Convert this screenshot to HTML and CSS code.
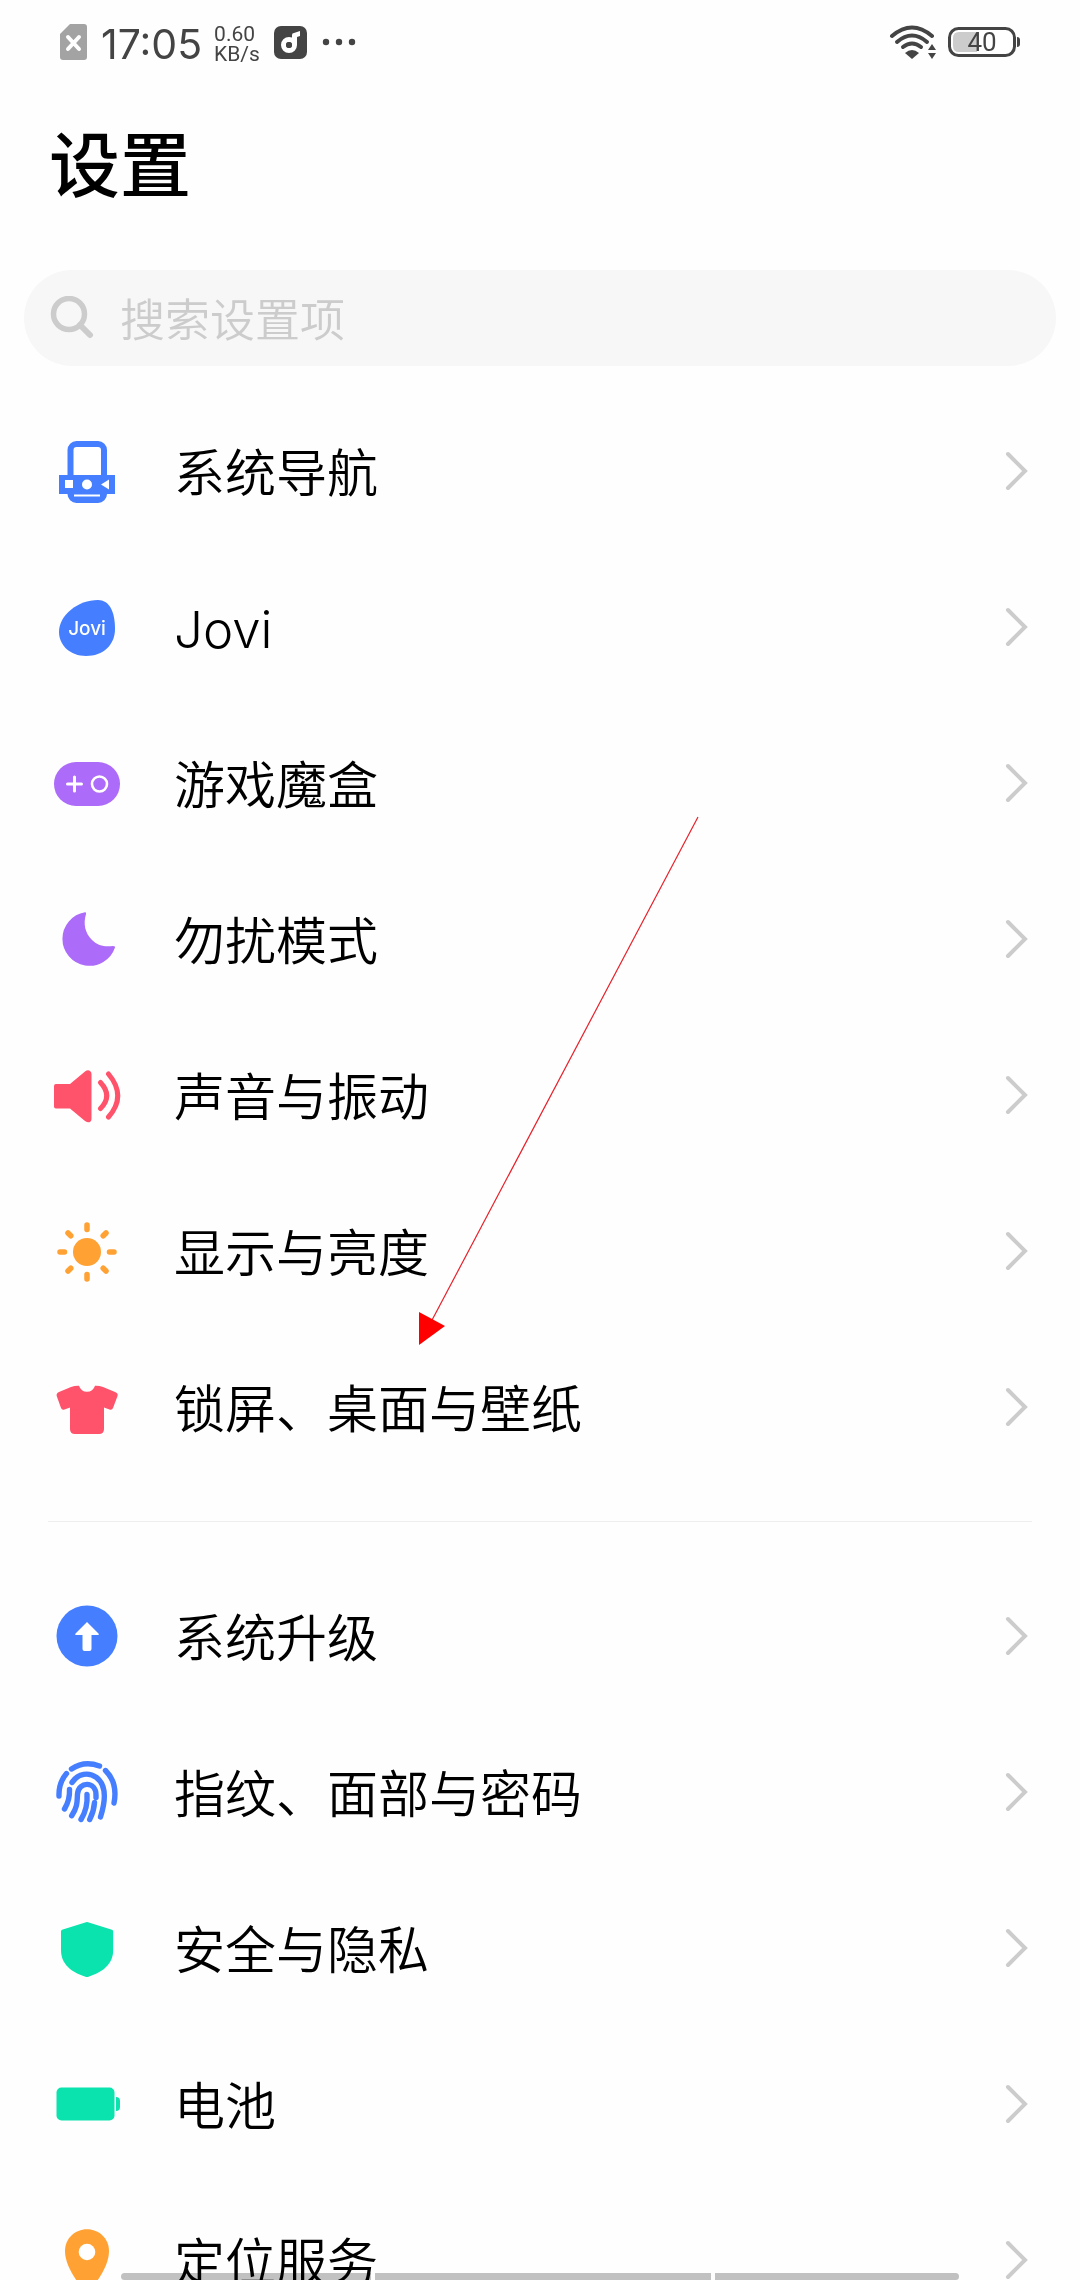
FILE: index.html
```html
<!DOCTYPE html>
<html lang="zh-CN">
<head>
    <meta charset="UTF-8">
    <meta name="viewport" content="width=device-width, initial-scale=1.0">
    <title>设置</title>
    <link rel="stylesheet" href="styles.css">
</head>
<body>
    <div class="screen">
        <div class="status-bar">
            <div class="status-left">
                <svg class="sim" width="27" height="36" viewBox="0 0 27 36">
                    <path d="M10 0H24Q27 0 27 3V33Q27 36 24 36H3Q0 36 0 33V10Z" fill="#a3a3a3"/>
                    <path d="M8 13L19 25M19 13L8 25" stroke="#fff" stroke-width="4" stroke-linecap="round"/>
                </svg>
                <span class="time">17:05</span>
                <div class="speed">
                    <span>0.60</span>
                    <span>KB/s</span>
                </div>
                <svg class="app" width="33" height="33" viewBox="0 0 33 33">
                    <rect width="33" height="33" rx="7" fill="#444"/>
                    <circle cx="15" cy="19" r="5.5" fill="none" stroke="#fff" stroke-width="5"/>
                    <path d="M18 17V9Q18 7 20 7L26 5V10L23 11V19Z" fill="#fff"/>
                    <circle cx="15" cy="19" r="3" fill="#444"/>
                </svg>
                <svg class="dots" width="34" height="8" viewBox="0 0 34 8" fill="#444">
                    <circle cx="4" cy="4" r="3.2"/>
                    <circle cx="17" cy="4" r="3.2"/>
                    <circle cx="30" cy="4" r="3.2"/>
                </svg>
            </div>
            <div class="status-right">
                <svg class="wifi" width="48" height="36" viewBox="0 0 48 36">
                    <g fill="none" stroke="#444" stroke-width="4" stroke-linecap="round">
                        <path d="M3 12Q23 -5 43 12"/>
                        <path d="M8 18Q23 5 38 18"/>
                        <path d="M14 23Q23 16 32 23"/>
                    </g>
                    <path d="M16 29Q23 23 30 29L23 35Z" fill="#444"/>
                    <path d="M39 26L43 20L47 26ZM39 29H47L43 35Z" fill="#444"/>
                </svg>
                <svg class="battery" width="72" height="30" viewBox="0 0 72 30">
                    <rect x="1.5" y="1.5" width="65" height="27" rx="9" fill="#fff" stroke="#444" stroke-width="3"/>
                    <path d="M29 5V25H11Q5 25 5 19V11Q5 5 11 5Z" fill="#ccc"/>
                    <path d="M69 10Q72 10 72 13V17Q72 20 69 20Z" fill="#444"/>
                    <text x="34" y="24" text-anchor="middle" class="battery-text">40</text>
                </svg>
            </div>
        </div>

        <h1>设置</h1>

        <label class="search">
            <svg width="44" height="44" viewBox="0 0 44 44" fill="none" stroke="#ccc">
                <circle cx="19" cy="18" r="15.5" stroke-width="5.5"/>
                <path d="M30 29L40 39" stroke-width="6" stroke-linecap="round"/>
            </svg>
            <input type="text" placeholder="搜索设置项" aria-label="搜索设置项">
        </label>

        <nav class="list">
            <a class="row" href="#navigation">
                <svg class="icon" viewBox="0 0 72 72">
                    <rect x="19.5" y="9" width="33.5" height="56" rx="6" fill="#fff" stroke="#457eff" stroke-width="6"/>
                    <path d="M8 40H64V59H8ZM20 58H53V64H20Z" fill="#457eff"/>
                    <path d="M14 45H22V53H14ZM58 44.500V54.500L50 49.500ZM23 59.500H49V61.500H23Z" fill="#fff"/>
                    <circle cx="36" cy="49.500" r="5" fill="#fff"/>
                </svg>
                <span class="label">系统导航</span>
                <svg class="chevron" viewBox="0 0 24 40"><path d="M3 3L20 20L3 37"/></svg>
            </a>
            <a class="row" href="#jovi">
                <svg class="icon" viewBox="0 0 72 72">
                    <path d="M47 9C58 9 64 20 64 38C64 54 52 65 35 65C19 65 8 54 8 41C8 24 27 9 47 9Z" fill="#457eff"/>
                    <text x="36" y="44" text-anchor="middle" class="jovi-text">Jovi</text>
                </svg>
                <span class="label">Jovi</span>
                <svg class="chevron" viewBox="0 0 24 40"><path d="M3 3L20 20L3 37"/></svg>
            </a>
            <a class="row" href="#game">
                <svg class="icon" viewBox="0 0 72 72">
                    <rect x="3" y="15" width="66" height="44" rx="22" fill="#ac6bf8"/>
                    <path d="M16.500 37H30.500M23.500 30V44" stroke="#fff" stroke-width="3" stroke-linecap="round"/>
                    <circle cx="48.500" cy="37" r="7.500" fill="none" stroke="#fff" stroke-width="2.600"/>
                </svg>
                <span class="label">游戏魔盒</span>
                <svg class="chevron" viewBox="0 0 24 40"><path d="M3 3L20 20L3 37"/></svg>
            </a>
            <a class="row" href="#dnd">
                <svg class="icon" viewBox="0 0 72 72">
                    <path d="M34 9.200Q35.500 9 35 11C32 21 34 30 41 37C47 43 54 44 62 43Q64.500 43 64 44.500A27 27 0 1 1 34 9.200Z" fill="#ac6bf8"/>
                </svg>
                <span class="label">勿扰模式</span>
                <svg class="chevron" viewBox="0 0 24 40"><path d="M3 3L20 20L3 37"/></svg>
            </a>
            <a class="row" href="#sound">
                <svg class="icon" viewBox="0 0 72 72">
                    <path d="M5 25H19L34 12.500Q37 10.500 39 12Q40.500 13 40.500 15V60Q40.500 62 39 63Q37 64 34 62L19 49.500H5Q3 49.500 3 47.500V27Q3 25 5 25Z" fill="#ff526b"/>
                    <path d="M49.500 23.500Q62 37 49.500 49.500M57.500 15Q76 37 57.500 58" fill="none" stroke="#ff526b" stroke-width="5" stroke-linecap="round"/>
                </svg>
                <span class="label">声音与振动</span>
                <svg class="chevron" viewBox="0 0 24 40"><path d="M3 3L20 20L3 37"/></svg>
            </a>
            <a class="row" href="#display">
                <svg class="icon" viewBox="0 0 72 72">
                    <circle cx="36" cy="37" r="14" fill="#ffa133"/>
                    <path d="M36 10V14.500M36 59.500V64M9 37H13.500M58.500 37H63M17 18L19.800 20.800M52.200 53.200L55 56M55 18L52.200 20.800M17 56L19.800 53.200" stroke="#ffa133" stroke-width="5.500" stroke-linecap="round"/>
                </svg>
                <span class="label">显示与亮度</span>
                <svg class="chevron" viewBox="0 0 24 40"><path d="M3 3L20 20L3 37"/></svg>
            </a>
            <a class="row" href="#wallpaper">
                <svg class="icon" viewBox="0 0 72 72">
                    <path d="M28 14.700Q30 20.700 36 20.700Q42 20.700 44 14.700Q48 14.500 52 16L64 21Q67.500 22.500 66.500 25L62 37Q61 39.500 58.500 38.500L53 36.500V58Q53 63 48 63H24Q19 63 19 58V36.500L13.500 38.500Q11 39.500 10 37L5.700 25Q5 22.500 8 21L20 16Q24 14.500 28 14.700Z" fill="#ff526b"/>
                </svg>
                <span class="label">锁屏、桌面与壁纸</span>
                <svg class="chevron" viewBox="0 0 24 40"><path d="M3 3L20 20L3 37"/></svg>
            </a>

            <hr>

            <a class="row" href="#upgrade">
                <svg class="icon" viewBox="0 0 72 72">
                    <circle cx="36" cy="36" r="30.500" fill="#457eff"/>
                    <path d="M36 22L47.500 33.500Q48.500 35 47 35H40.500V49Q40.500 51 38.500 51H33.500Q31.500 51 31.500 49V35H25Q23.500 35 24.500 33.500Z" fill="#fff"/>
                </svg>
                <span class="label">系统升级</span>
                <svg class="chevron" viewBox="0 0 24 40"><path d="M3 3L20 20L3 37"/></svg>
            </a>
            <a class="row" href="#security">
                <svg class="icon" viewBox="0 0 72 72">
                    <g fill="none" stroke="#457eff" stroke-width="5.400" stroke-linecap="round">
                        <path d="M20.500 13Q33 4.500 48.500 10"/>
                        <path d="M15.500 17.500Q7.500 27 8 40"/>
                        <path d="M54.500 14.500Q67 27 63 47"/>
                        <path d="M21 26.500C27 17 38 16 45.500 21.500C58 31 53 50 49.500 61"/>
                        <path d="M18.500 33.500Q19 44 13.500 53"/>
                        <path d="M20.700 59.700C27 50 26 45 26.500 38C27.500 25 45 25 45 39V41.500"/>
                        <path d="M36 38.500Q37 52 30 63.500"/>
                        <path d="M43.500 46.500Q43 55 38.700 63.500"/>
                    </g>
                </svg>
                <span class="label">指纹、面部与密码</span>
                <svg class="chevron" viewBox="0 0 24 40"><path d="M3 3L20 20L3 37"/></svg>
            </a>
            <a class="row" href="#privacy">
                <svg class="icon" viewBox="0 0 72 72">
                    <path d="M35 10.300Q36 9.800 37 10.300L61 17.800Q62.200 18.200 62.200 19.500V38C62.200 52 52 60 37.500 64.700Q36 65.200 34.500 64.700C20 60 10 52 10 38V19.500Q10 18.200 11 17.800Z" fill="#0be3ae"/>
                </svg>
                <span class="label">安全与隐私</span>
                <svg class="chevron" viewBox="0 0 24 40"><path d="M3 3L20 20L3 37"/></svg>
            </a>
            <a class="row" href="#battery">
                <svg class="icon" viewBox="0 0 72 72" fill="#0be3ae">
                    <rect x="5.500" y="19.500" width="58" height="33" rx="5"/>
                    <path d="M65 29Q69 29 69 33V39Q69 43 65 43Z"/>
                </svg>
                <span class="label">电池</span>
                <svg class="chevron" viewBox="0 0 24 40"><path d="M3 3L20 20L3 37"/></svg>
            </a>
            <a class="row" href="#location">
                <svg class="icon" viewBox="0 0 72 72">
                    <path d="M36 5.300C48 5.300 58 14.500 58 27C58 40 49 54 40 65Q36 69 32 65C23 54 14 40 14 27C14 14.500 24 5.300 36 5.300Z" fill="#ffa133"/>
                    <circle cx="36" cy="28" r="8.300" fill="#fff"/>
                </svg>
                <span class="label">定位服务</span>
                <svg class="chevron" viewBox="0 0 24 40"><path d="M3 3L20 20L3 37"/></svg>
            </a>
        </nav>

        <!-- red pointer drawn over the list -->
        <svg class="pointer" width="282" height="530" viewBox="0 0 282 530">
            <path d="M280 1L13 506" stroke="#e6202a" stroke-width="1.200"/>
            <path d="M1 496L27 510L1 529Z" fill="#f00"/>
        </svg>

        <div class="gesture-bar">
            <span></span>
            <span></span>
            <span></span>
        </div>
    </div>
</body>
</html>
```

FILE: styles.css
```css
* {
    box-sizing: border-box;
}
body {
    margin: 0;
    background-color: #fefefe;
    color: #000;
    font-family: Inter, "Noto Sans CJK SC", sans-serif;
}
.screen {
    position: relative;
    height: 100vh;
    overflow: hidden;
}

/* status bar */
.status-bar {
    display: flex;
    justify-content: space-between;
    align-items: center;
    height: 84px;
    padding: 0 60px;
    color: #444;
}
.status-left,
.status-right {
    display: flex;
    align-items: center;
}
.time {
    margin-left: 14px;
    padding-top: 3px;
    font-size: 41px;
    line-height: 48px;
}
.speed {
    display: flex;
    flex-direction: column;
    margin-left: 12px;
    padding-top: 3px;
    font-family: Roboto, sans-serif;
    font-size: 21px;
    line-height: 20px;
}
.app {
    margin-left: 14px;
}
.dots {
    margin-left: 15px;
}
.status-right {
    gap: 11px;
}
.battery-text {
    fill: #444;
    font-family: Roboto, sans-serif;
    font-size: 26px;
}

h1 {
    margin: 31px 49px 55px;
    font-size: 71px;
    font-weight: 500;
    line-height: 100px;
}

/* search */
.search {
    display: flex;
    align-items: center;
    gap: 26px;
    height: 96px;
    margin: 0 24px 27px;
    padding: 0 26px;
    border-radius: 48px;
    background-color: #f7f7f7;
}
.search input {
    flex: 1;
    min-width: 0;
    padding: 4px 0 0;
    border: none;
    outline: none;
    background: none;
    font-family: inherit;
    font-size: 45px;
    font-weight: 350;
}
.search input::placeholder {
    color: #ccc;
}

/* settings list */
.row {
    display: flex;
    align-items: center;
    height: 156px;
    padding: 0 51px;
    color: #000;
    text-decoration: none;
}
.icon {
    flex: none;
    width: 72px;
    height: 72px;
}
.label {
    flex: 1;
    margin-left: 51px;
    padding-top: 6px;
    font-size: 51px;
    font-weight: 350;
    line-height: 76px;
}
.chevron {
    flex: none;
    width: 24px;
    height: 40px;
    fill: none;
    stroke: #ccc;
    stroke-width: 4;
    stroke-linecap: round;
}
.jovi-text {
    fill: #fff;
    font-size: 19px;
    font-weight: 500;
}
hr {
    height: 1px;
    margin: 36px 48px;
    border: none;
    background-color: #eee;
}

.pointer {
    position: absolute;
    top: 816px;
    left: 418px;
    fill: none;
}

/* bottom gesture bar */
.gesture-bar {
    position: absolute;
    right: 121px;
    bottom: 0;
    left: 121px;
    display: grid;
    grid-template-columns: 250fr 336fr 244fr;
    gap: 4px;
    mix-blend-mode: multiply;
}
.gesture-bar span {
    height: 7px;
    background-color: #c2c2c2;
}
.gesture-bar span:first-child {
    border-radius: 4px 0 0 4px;
}
.gesture-bar span:last-child {
    border-radius: 0 4px 4px 0;
}
```
